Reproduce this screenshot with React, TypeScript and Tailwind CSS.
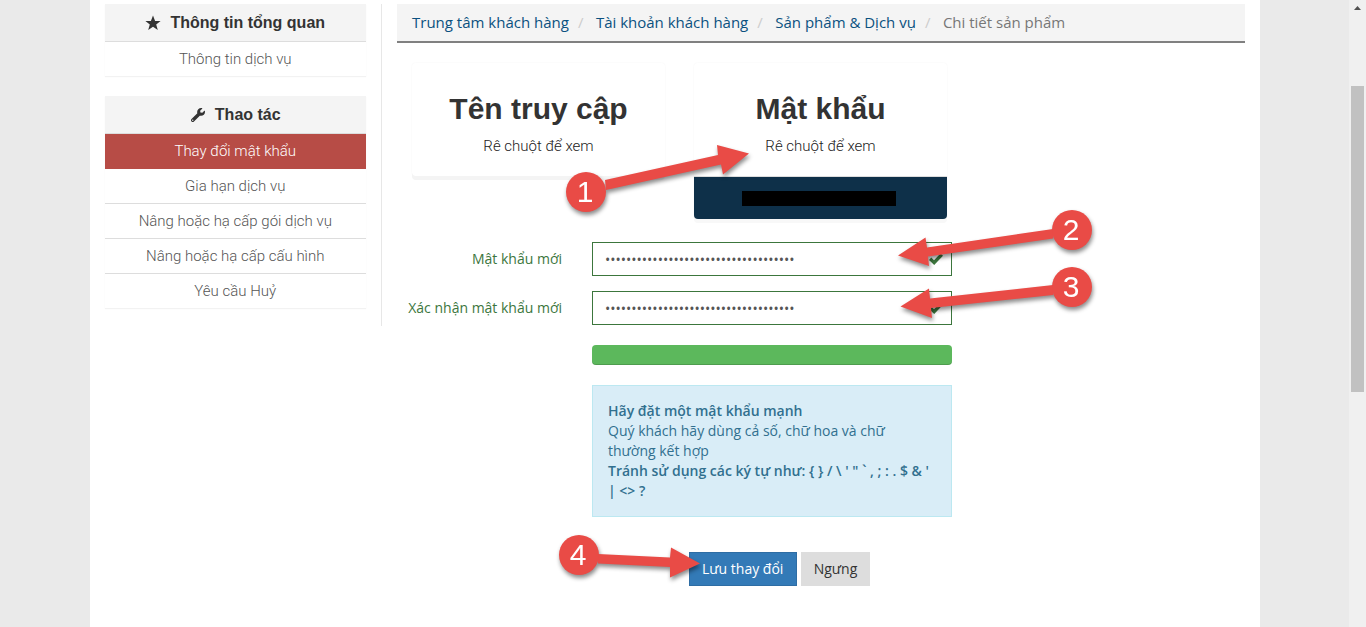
import { FaWrench } from "react-icons/fa";
import type { ReactNode } from "react";

const actions = [
  "Gia hạn dịch vụ",
  "Nâng hoặc hạ cấp gói dịch vụ",
  "Nâng hoặc hạ cấp cấu hình",
  "Yêu cầu Huỷ",
];

const crumbs = ["Trung tâm khách hàng", "Tài khoản khách hàng", "Sản phẩm & Dịch vụ"];

const steps = [
  { n: "1", x: 496, y: 192, d: "M515 180 L628 155 L627 145 L659 153.5 L633 174.5 L631 164.5 L516 190 Z" },
  { n: "2", x: 982, y: 230, d: "M963 229 L837 247.5 L835.5 237.5 L808 255.5 L839 266 L838 256.5 L963 238.5 Z" },
  { n: "3", x: 982, y: 287, d: "M963 285 L840 298.5 L839 288.5 L810.5 306.5 L842 318 L841 308 L963 295 Z" },
  { n: "4", x: 489, y: 555, d: "M508 554 L580 557.5 L581 547.5 L610 563.5 L580 577.5 L580 567 L508 563.5 Z" },
];

function StarIcon() {
  return (
    <svg viewBox="0 0 16 16" className="h-4 w-4" fill="currentColor" aria-hidden="true">
      <path d="M8 0.5 L10.1 5.9 L15.6 6.1 L11.2 9.6 L12.8 15 L8 11.8 L3.2 15 L4.8 9.6 L0.4 6.1 L5.9 5.9 Z" />
    </svg>
  );
}

function PanelHeading({ icon, children }: { icon: ReactNode; children: ReactNode }) {
  return (
    <h2 className="flex h-[38px] items-center justify-center gap-[9px] border-b border-[#ddd] bg-[#f4f4f4] font-['Liberation_Sans',sans-serif] text-base font-bold text-[#333]">
      {icon}
      {children}
    </h2>
  );
}

function InfoCard({ title, secret }: { title: string; secret?: boolean }) {
  return (
    <section
      className={`flex-1 self-start rounded-sm text-center ${
        secret ? "shadow-[0_4px_0_#f8f8f8,0_0_2px_#f4f4f4]" : "shadow-[0_4px_0_#f4f4f4,0_0_2px_#f4f4f4]"
      }`}
    >
      <div className="h-[113px] pt-7">
        <h3 className="font-['Liberation_Sans',sans-serif] text-3xl leading-9 font-bold text-[#333]">{title}</h3>
        <p className="pt-[9px] font-[Roboto,sans-serif] text-[15px] leading-5 font-light text-[#222]">Rê chuột để xem</p>
      </div>
      {secret && (
        <div className="flex h-[43px] items-center justify-center rounded-b-sm border-t border-[#ddd] bg-[#0e3049] pr-1">
          <div className="h-[15px] w-[154px] bg-black" />
        </div>
      )}
    </section>
  );
}

function PasswordRow({ id, label }: { id: string; label: string }) {
  return (
    <div className="flex items-center gap-[30px]">
      <label htmlFor={id} className="w-[165px] text-right text-[#3c763d]">
        {label}
      </label>
      <div className="relative w-[360px]">
        <input
          id={id}
          type="password"
          defaultValue="abcdefghijklmnopqrstuvwxyz0123456789"
          className="block h-[34px] w-full border border-[#3c763d] bg-white px-3 text-sm text-[#555] outline-none"
        />
        <svg viewBox="0 0 14 12" className="absolute top-[11px] right-[9px] h-3 w-[14px]" fill="#3c763d" aria-hidden="true">
          <path d="M0 7 L2.3 4.6 L5 7.2 L11.5 0.5 L14 2.7 L5.2 12 Z" />
        </svg>
      </div>
    </div>
  );
}

function Annotations() {
  return (
    <svg className="pointer-events-none absolute top-0 left-0 h-[627px] w-[1170px] drop-shadow-[1px_3px_2px_rgba(0,0,0,0.45)]" viewBox="0 0 1170 627">
      {steps.map((s) => (
        <g key={s.n} fill="#e94b46">
          <path d={s.d} />
          <circle cx={s.x} cy={s.y} r="20" />
        </g>
      ))}
      {steps.map((s) => (
        <text key={s.n} x={s.x - 1} y={s.y + 10} textAnchor="middle" fill="#fff" className="font-['Liberation_Sans',sans-serif] text-[30px]">
          {s.n}
        </text>
      ))}
    </svg>
  );
}

export default function App() {
  return (
    <div className="flex min-h-screen bg-[#eaeaea] font-['Open_Sans',sans-serif] text-sm text-[#333]">
      <div className="flex flex-1 justify-center">
        <div className="relative flex w-full max-w-[1170px] items-start bg-white pt-1">
          <aside className="flex w-1/4 flex-col gap-5 border-r border-[#e7e7e7] px-[15px] pb-[18px] text-center font-[Roboto,sans-serif] text-[15px] leading-[34px] font-light text-[#555]">
            <nav className="shadow-[0_1px_1px_rgba(0,0,0,0.05)]">
              <PanelHeading icon={<StarIcon />}>Thông tin tổng quan</PanelHeading>
              <a href="#info" className="block h-[34px]">Thông tin dịch vụ</a>
            </nav>
            <nav className="shadow-[0_1px_1px_rgba(0,0,0,0.05)]">
              <PanelHeading icon={<FaWrench className="h-[14px] w-4" />}>Thao tác</PanelHeading>
              <a href="#password" className="block h-[35px] bg-[#b74c46] text-white">Thay đổi mật khẩu</a>
              {actions.map((a) => (
                <a key={a} href="#action" className="block h-[35px] border-b border-[#ddd] last:h-[34px] last:border-b-0">
                  {a}
                </a>
              ))}
            </nav>
          </aside>

          <main className="flex-1 px-[15px]">
            <nav aria-label="breadcrumb" className="border-b-2 border-[#808080] bg-[#f4f4f4] px-[15px]">
              <ol className="flex h-[37px] items-center text-[15px]">
                {crumbs.map((c) => (
                  <li key={c} className="flex">
                    <a href="#crumb" className="text-[#0b5180]">{c}</a>
                    <span className="w-[27px] pl-[9px] text-[#ccc]">/</span>
                  </li>
                ))}
                <li className="text-[#777]">Chi tiết sản phẩm</li>
              </ol>
            </nav>

            <div className="mt-5 ml-[15px] flex w-[535px] gap-[29px]">
              <InfoCard title="Tên truy cập" />
              <InfoCard title="Mật khẩu" secret />
            </div>

            <form className="mt-[23px] flex flex-col" onSubmit={(e) => e.preventDefault()}>
              <div className="flex flex-col gap-[15px]">
                <PasswordRow id="new-password" label="Mật khẩu mới" />
                <PasswordRow id="confirm-password" label="Xác nhận mật khẩu mới" />
              </div>
              <div className="ml-[195px] flex w-[360px] flex-col gap-5 pt-5">
                <div
                  role="progressbar"
                  aria-valuenow={100}
                  aria-label="Độ mạnh mật khẩu"
                  className="h-5 rounded bg-[#5cb85c] shadow-[inset_0_-1px_0_rgba(0,0,0,0.15)]"
                />
                <div className="border border-[#bce8f1] bg-[#d9edf7] p-[15px] leading-5 text-[#31708f]">
                  <strong className="font-semibold">Hãy đặt một mật khẩu mạnh</strong>
                  <br />
                  Quý khách hãy dùng cả số, chữ hoa và chữ thường kết hợp
                  <br />
                  <strong className="font-semibold">{"Tránh sử dụng các ký tự như: { } / \\ ' \" ` , ; : . $ & ' | <> ?"}</strong>
                </div>
              </div>
              <div className="ml-[195px] flex w-[375px] justify-center gap-1 pt-[35px]">
                <button type="submit" className="h-[34px] w-[108px] border border-[#2e6da4] bg-[#337ab7] text-white">Lưu thay đổi</button>
                <button type="button" className="h-[34px] border border-[#ddd] bg-[#ddd] px-3 text-[#333]">Ngưng</button>
              </div>
            </form>
          </main>
          <Annotations />
        </div>
      </div>

      <div className="flex w-[17px] flex-col items-center bg-[#f0f0f0]" aria-hidden="true">
        <svg viewBox="0 0 7 4" className="mt-[6px] h-1 w-[7px]" fill="#505050">
          <path d="M0 4 L3.5 0 L7 4 Z" />
        </svg>
        <div className="mt-[76px] h-[306px] w-[13px] bg-[#c1c1c1]" />
      </div>
    </div>
  );
}
